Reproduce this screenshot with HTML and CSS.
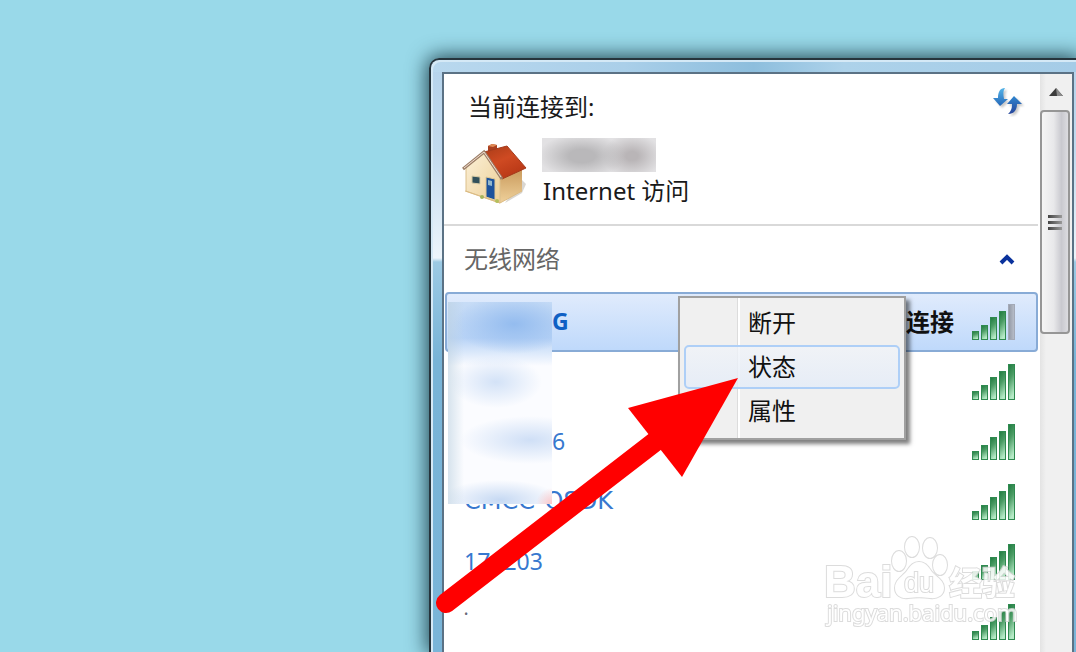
FILE: index.html
```html
<!DOCTYPE html>
<html lang="zh-CN">
<head>
<meta charset="utf-8">
<title>无线网络</title>
<link rel="stylesheet" href="styles.css">
</head>
<body>
<svg class="defs" width="0" height="0" aria-hidden="true">
  <defs>
    <linearGradient id="green" x1="0" y1="0" x2="0.3" y2="1">
      <stop offset="0" stop-color="#1e7a3e"/><stop offset="0.45" stop-color="#4b9c65"/><stop offset="1" stop-color="#b5eac6"/>
    </linearGradient>
    <linearGradient id="grey" x1="0" y1="0" x2="1" y2="0">
      <stop offset="0" stop-color="#9298a4"/><stop offset="1" stop-color="#b9bfca"/>
    </linearGradient>
    <g id="bars" stroke="#2f8a50">
      <rect x="1.500" y="29.500" width="6" height="8"/>
      <rect x="10.500" y="23.500" width="6" height="14"/>
      <rect x="19.500" y="15.500" width="6" height="22"/>
      <rect x="28.500" y="9.500" width="6" height="28"/>
    </g>
    <symbol id="signal" viewBox="0 0 46 40"><g fill="url(#green)"><use href="#bars"/><rect x="37.500" y="2.500" width="6" height="35" stroke="#2f8a50"/></g></symbol>
    <symbol id="signal-4" viewBox="0 0 46 40"><g fill="url(#green)"><use href="#bars"/></g><rect x="37.500" y="2.500" width="6" height="35" fill="url(#grey)" stroke="#a3a9b6"/></symbol>
  </defs>
</svg>

<main class="window">
  <div class="panel">
    <div class="content">
      <header class="current">
        <div class="current-head">
          <h1>当前连接到:</h1>
          <button class="icon-button" aria-label="刷新">
            <svg width="32" height="30" viewBox="0 0 32 30">
              <defs><linearGradient id="blue" x1="0" y1="0" x2="0" y2="1"><stop offset="0" stop-color="#55b4e8"/><stop offset="1" stop-color="#2467b9"/></linearGradient>
              <linearGradient id="blue2" x1="0" y1="0" x2="0" y2="1"><stop offset="0" stop-color="#2f86cf"/><stop offset="1" stop-color="#26459a"/></linearGradient></defs>
              <g class="refresh-shadow">
                <path fill="url(#blue)" d="M12 1C7 1 5 5 5 11H0l7 8 8-7h-4C10 7 10 4 12 1z"/>
                <path fill="url(#blue2)" d="M21 9l-7 8h5c0 5-1 7-4 10 6 0 9-4 9-10h5z"/>
              </g>
            </svg>
          </button>
        </div>
        <div class="current-body">
          <svg class="house" width="66" height="64" viewBox="0 0 66 64" aria-hidden="true">
            <defs>
              <linearGradient id="roof" x1="0" y1="0" x2="0.6" y2="1"><stop offset="0" stop-color="#a83c18"/><stop offset="0.5" stop-color="#cf4a22"/><stop offset="1" stop-color="#b73716"/></linearGradient>
              <linearGradient id="front" x1="0" y1="0" x2="1" y2="1"><stop offset="0" stop-color="#fbf0d8"/><stop offset="1" stop-color="#edcf96"/></linearGradient>
              <linearGradient id="side" x1="0" y1="0" x2="0" y2="1"><stop offset="0" stop-color="#c99a5c"/><stop offset="1" stop-color="#efd19b"/></linearGradient>
            </defs>
            <path d="M59 36l5 5-4 9-17 10z" fill="#c9c5bd" opacity=".7"/>
            <path d="M37 32L60 26V48L38 60z" fill="url(#side)"/>
            <path d="M4 24L23 10L38 34V60L4 48z" fill="url(#front)" stroke="#dcc08c"/>
            <path d="M26 3l4-2 5 1v8l-9 2z" fill="#a94020"/><path d="M26 3l4-2 5 1-4 2z" fill="#e08a55"/>
            <path d="M22 9L45 3L64 25L40 36z" fill="url(#roof)" stroke="#a33a1c"/>
            <path d="M1 26L22 9L40 36" fill="none" stroke="#9d8068" stroke-width="3"/>
            <path d="M2 25L22 9L39 34" fill="none" stroke="#f3ded2" stroke-width="1"/>
            <path d="M10 33l8 1v7l-8-1z" fill="#31505b" stroke="#d8cba5"/>
            <path d="M24 34l9 2v21l-9-3z" fill="#1c529c" stroke="#e2c993"/>
            <path d="M26 37l4 1v5l-4-1z" fill="#93b7cc"/>
            <path d="M3 48L38 60L60 48" fill="none" stroke="#dcbb82" stroke-width="1"/>
            <circle cx="20" cy="54" r="2" fill="#a5b45c"/><circle cx="35" cy="58" r="2" fill="#b4bf5b"/>
          </svg>
          <div class="current-text">
            <div class="name-blur"></div>
            <p>Internet 访问</p>
          </div>
        </div>
      </header>

      <section class="networks">
        <div class="section-head">
          <h2>无线网络</h2>
          <button class="icon-button" aria-label="折叠">
            <svg width="16" height="12" viewBox="0 0 16 12"><path d="M2 10L8 4l6 6" fill="none" stroke="#0a329c" stroke-width="4"/></svg>
          </button>
        </div>
        <ul class="list">
          <li class="row selected"><a href="#"><span class="name masked">G</span><span class="state">已连接</span><svg class="signal"><use href="#signal-4"/></svg></a></li>
          <li class="row"><a href="#" aria-label="无线网络"><span class="name"></span><svg class="signal"><use href="#signal"/></svg></a></li>
          <li class="row"><a href="#"><span class="name masked">6</span><svg class="signal"><use href="#signal"/></svg></a></li>
          <li class="row"><a href="#"><span class="name caps">CMCC-QSDK</span><svg class="signal"><use href="#signal"/></svg></a></li>
          <li class="row"><a href="#"><span class="name">171203</span><svg class="signal"><use href="#signal"/></svg></a></li>
          <li class="row"><a href="#"><span class="name dot">˙</span><svg class="signal"><use href="#signal"/></svg></a></li>
        </ul>
        <div class="list-blur"></div>
        <div class="menu" role="menu">
          <button role="menuitem">断开</button>
          <button role="menuitem" class="hover">状态</button>
          <button role="menuitem">属性</button>
        </div>
      </section>
    </div>

    <div class="scrollbar">
      <button class="icon-button scroll-up" aria-label="向上滚动">
        <svg width="16" height="10" viewBox="0 0 16 10"><path d="M1 9L8 1l7 8z" fill="#3c3c3c"/><path d="M8 1l7 8H9z" fill="#8a8a8a"/></svg>
      </button>
      <div class="thumb"><span></span><span></span><span></span></div>
    </div>
  </div>

  <svg class="arrow" width="320" height="250" viewBox="430 370 320 250" aria-hidden="true">
    <path d="M446 603L665 434" stroke="#f00" stroke-width="20" stroke-linecap="round"/>
    <path d="M738 378L628 408L682 477z" fill="#f00"/>
  </svg>

  <svg class="watermark" width="200" height="100" viewBox="820 532 200 100" role="img" aria-label="Baidu经验">
    <g class="mark">
      <ellipse cx="899" cy="561" rx="7" ry="10"/>
      <ellipse cx="912" cy="547" rx="7" ry="10"/>
      <ellipse cx="930" cy="548" rx="7" ry="10"/>
      <ellipse cx="940" cy="565" rx="7" ry="10"/>
      <path d="M919 562c-8 0-10 7-14 11-5 5-10 8-10 15 0 7 6 11 13 10 8-1 14-1 22 0 8 1 14-3 14-10 0-7-6-10-11-15-4-4-6-11-14-11z"/>
      <text x="824" y="597" class="wm-bai">Bai</text>
      <text x="904" y="592" class="wm-du">du</text>
      <text x="949" y="595" class="wm-cjk">经验</text>
      <text x="827" y="621" class="wm-url">jingyan.baidu.com</text>
    </g>
  </svg>
</main>
</body>
</html>
```
FILE: styles.css
```css
* { box-sizing: border-box; }

body {
  margin: 0;
  height: 100vh;
  overflow: hidden;
  display: flex;
  padding: 58px 0 0 429px;
  background: #99d9e9;
  color: #1a1a1a;
  font-family: "Noto Sans", "Noto Sans CJK SC", sans-serif;
  font-size: 24px;
  line-height: 32px;
}

h1, h2, p, ul { margin: 0; padding: 0; font-size: 24px; font-weight: 400; }
button { font: inherit; color: inherit; border: 0; padding: 0; background: none; }
.icon-button svg { display: block; }
.defs { position: absolute; }

.window {
  position: relative;
  flex: 1;
  min-width: 0;
  display: flex;
  padding: 12px 2px 0 11px;
  margin-right: -2px;
  border: 2px solid #26343c;
  border-bottom: 0;
  border-radius: 10px 0 0 0;
  background:
    linear-gradient(90deg, #b9d8ee, #aacfe9 30%, #8dbedd 50%, #add2ea 64%, #a5cce7) top / 100% 12px no-repeat,
    linear-gradient(#b5d3eb, #c2dbef 90px, #edf5fb 198px, #9ccae4 202px, #78b4d7 300px, #7ab5d8);
  box-shadow: 0 0 20px 2px #214550, inset 2px 2px 0 #d5e9f6;
}

.panel {
  flex: 1;
  min-width: 0;
  display: flex;
  border: 2px solid #5b7285;
  border-bottom: 0;
  background: #fff;
}

.content { flex: 1; min-width: 0; }

.current {
  height: 152px;
  margin-right: 2px;
  padding: 13px 13px 0 18px;
  border-bottom: 2px solid #d9d9d9;
}
.current-head { display: flex; justify-content: space-between; padding-left: 6px; }
.current-head h1 { padding-top: 4px; }
.current-head .icon-button { align-self: flex-start; }
.refresh-shadow { filter: drop-shadow(2px 2px 1px #c8c8c8); }
.current-body { display: flex; gap: 14px; padding-top: 15px; }
.house { margin-top: 5px; }
.current-text { display: flex; flex-direction: column; gap: 3px; }
.current-text p { padding-left: 1px; }
.name-blur {
  width: 114px;
  height: 34px;
  background:
    radial-gradient(ellipse 44px 22px at 40px 18px, #b9b8ba 30%, transparent),
    radial-gradient(ellipse 30px 22px at 90px 18px, #b9b5b7 20%, transparent),
    #e2e1e3;
}

.networks { position: relative; }
.section-head {
  display: flex;
  justify-content: space-between;
  align-items: center;
  height: 66px;
  padding: 0 25px 0 20px;
  color: #666;
}

.list { list-style: none; padding: 0 2px 0 1px; }
.row { height: 60px; border: 2px solid transparent; border-radius: 4px; }
.row a {
  display: flex;
  align-items: center;
  height: 100%;
  padding: 0 19px 0 17px;
  color: #3778cf;
  text-decoration: none;
}
.row.selected { border-color: #88abd6; background: linear-gradient(#e0ebfc, #bfd9fb); }
.name { flex: 1; font-size: 23px; padding-bottom: 2px; }
.caps { font-family: "DejaVu Sans", sans-serif; font-size: 24px; }
.masked { padding-left: 88px; }
.selected .name { color: #0f60c4; font-weight: 700; }
.dot { color: #667; }
.state { color: #111; font-weight: 700; padding-right: 17px; }
.signal { width: 46px; height: 40px; }

.list-blur {
  position: absolute;
  left: 4px;
  top: 76px;
  width: 104px;
  height: 202px;
  background:
    linear-gradient(90deg, rgba(190, 210, 225, .6), transparent 16px),
    radial-gradient(ellipse 60px 30px at 66px 22px, #94bcef, transparent),
    radial-gradient(ellipse 46px 26px at 48px 80px, #d3e2f7, transparent),
    radial-gradient(ellipse 70px 24px at 82px 138px, #cfdff6, transparent),
    radial-gradient(ellipse 16px 16px at 104px 202px, #fbc6c8, transparent),
    radial-gradient(ellipse 60px 20px at 52px 198px, #c6d9f3, transparent),
    linear-gradient(#c7dcf6, #b8d3f6 36px, #fbfcff 64px);
}

.menu {
  position: absolute;
  left: 234px;
  top: 70px;
  width: 228px;
  padding: 3px 4px 5px 4px;
  border: 2px solid #a0a0a0;
  box-shadow: 4px 4px 4px rgba(0, 0, 0, .5);
  background: linear-gradient(90deg, transparent 57px, #dcdcdc 57px, #dcdcdc 58px, #fff 58px, #fff 60px, transparent 60px) #f0f0f0;
}
.menu button {
  display: block;
  width: 100%;
  height: 44px;
  padding-left: 62px;
  border: 2px solid transparent;
  border-radius: 5px;
  text-align: left;
  color: #111;
}
.menu .hover { border-color: #aecff7; background: linear-gradient(rgba(240, 243, 248, .8), rgba(228, 236, 248, .8)); }

.scrollbar {
  width: 32px;
  display: flex;
  flex-direction: column;
  background: linear-gradient(90deg, #e3e3e3, #f0f0f0 6px);
}
.scroll-up { display: flex; justify-content: center; align-items: center; height: 36px; }
.thumb {
  width: 30px;
  height: 224px;
  display: flex;
  flex-direction: column;
  justify-content: center;
  align-items: center;
  gap: 3px;
  border: 2px solid #969696;
  border-radius: 4px;
  background: linear-gradient(90deg, #f5f5f5, #e8e8ea 45%, #c9c9cf 75%, #dcdce0);
}
.thumb span { width: 14px; height: 3px; background: linear-gradient(90deg, #444, #999); }

.arrow { position: absolute; left: -1px; top: 310px; }
.watermark { position: absolute; right: 56px; top: 472px; }
.mark { fill: #fff; stroke: #d6d6d6; stroke-width: 2px; paint-order: stroke; opacity: .85; }
.wm-bai { font: 700 44px "Liberation Sans", sans-serif; }
.wm-du { font: 400 27px "Liberation Sans", sans-serif; }
.wm-cjk { font: 700 33px "Noto Sans CJK SC", sans-serif; }
.wm-url { font: 400 22px "Noto Sans", sans-serif; }
```
